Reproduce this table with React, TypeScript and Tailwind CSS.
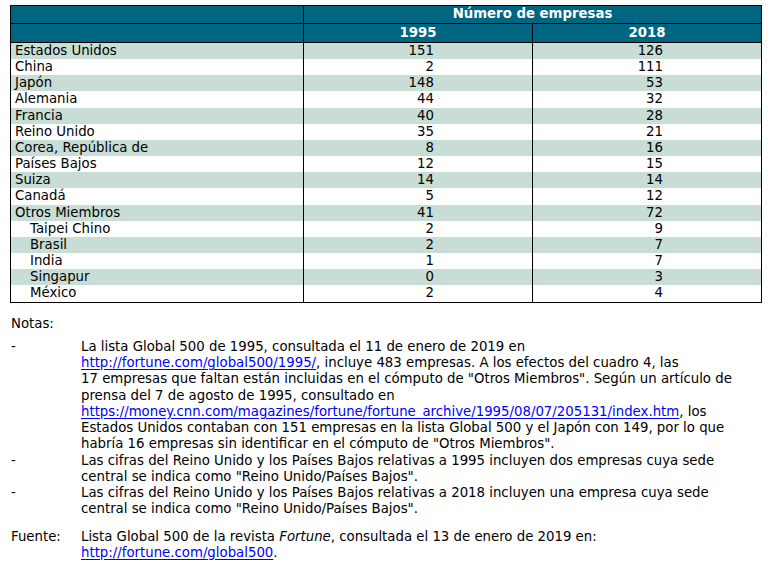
const rows: { name: string; a: number; b: number; sub?: boolean }[] = [
  { name: "Estados Unidos", a: 151, b: 126 },
  { name: "China", a: 2, b: 111 },
  { name: "Japón", a: 148, b: 53 },
  { name: "Alemania", a: 44, b: 32 },
  { name: "Francia", a: 40, b: 28 },
  { name: "Reino Unido", a: 35, b: 21 },
  { name: "Corea, República de", a: 8, b: 16 },
  { name: "Países Bajos", a: 12, b: 15 },
  { name: "Suiza", a: 14, b: 14 },
  { name: "Canadá", a: 5, b: 12 },
  { name: "Otros Miembros", a: 41, b: 72 },
  { name: "Taipei Chino", a: 2, b: 9, sub: true },
  { name: "Brasil", a: 2, b: 7, sub: true },
  { name: "India", a: 1, b: 7, sub: true },
  { name: "Singapur", a: 0, b: 3, sub: true },
  { name: "México", a: 2, b: 4, sub: true },
]

function Link({ children }: { children: React.ReactNode }) {
  return <span className="text-[#0000ff] underline underline-offset-2">{children}</span>
}

export default function App() {
  return (
    <div
      className="w-[773px] h-[568px] bg-white text-black text-[13.3px] leading-[16.25px] overflow-hidden"
      style={{ fontFamily: '"DejaVu Sans", Verdana, sans-serif' }}
    >
      <table className="ml-[10px] mt-[5px] w-[751px] border-collapse border border-black table-fixed">
        <colgroup>
          <col className="w-[293px]" />
          <col className="w-[229px]" />
          <col className="w-[229px]" />
        </colgroup>
        <thead className="bg-[#006580] text-white font-bold">
          <tr className="h-[18px]">
            <th className="border border-black p-0"></th>
            <th colSpan={2} className="border border-black p-0 text-center font-bold">
              Número de empresas
            </th>
          </tr>
          <tr className="h-[19px]">
            <th className="border border-black p-0"></th>
            <th className="border border-black p-0 pt-[1px] text-center font-bold">1995</th>
            <th className="border border-black p-0 pt-[1px] text-center font-bold">2018</th>
          </tr>
        </thead>
        <tbody>
          {rows.map((r, i) => (
            <tr key={r.name} className={`leading-[16.15px] ${i % 2 === 0 ? "bg-[#c8ddd5]" : "bg-white"}`}>
              <td className={`border-x border-black py-0 ${r.sub ? "pl-[19px]" : "pl-[4px]"}`}>{r.name}</td>
              <td className="border-x border-black py-0 pr-[98px] text-right">{r.a}</td>
              <td className="border-x border-black py-0 pr-[98px] text-right">{r.b}</td>
            </tr>
          ))}
        </tbody>
      </table>

      <div className="ml-[11px] mt-[13px]">Notas:</div>

      <div className="ml-[11px] mt-[7px] grid grid-cols-[70px_1fr] whitespace-nowrap">
        <div>-</div>
        <div>
          La lista Global 500 de 1995, consultada el 11 de enero de 2019 en
          <br />
          <Link>http://fortune.com/global500/1995/</Link>, incluye 483 empresas. A los efectos del cuadro 4, las
          <br />
          17 empresas que faltan están incluidas en el cómputo de "Otros Miembros". Según un artículo de
          <br />
          prensa del 7 de agosto de 1995, consultado en
          <br />
          <Link>https://money.cnn.com/magazines/fortune/fortune_archive/1995/08/07/205131/index.htm</Link>, los
          <br />
          Estados Unidos contaban con 151 empresas en la lista Global 500 y el Japón con 149, por lo que
          <br />
          habría 16 empresas sin identificar en el cómputo de "Otros Miembros".
        </div>
        <div>-</div>
        <div>
          Las cifras del Reino Unido y los Países Bajos relativas a 1995 incluyen dos empresas cuya sede
          <br />
          central se indica como "Reino Unido/Países Bajos".
        </div>
        <div>-</div>
        <div>
          Las cifras del Reino Unido y los Países Bajos relativas a 2018 incluyen una empresa cuya sede
          <br />
          central se indica como "Reino Unido/Países Bajos".
        </div>
        <div className="mt-[11px]">Fuente:</div>
        <div className="mt-[11px]">
          Lista Global 500 de la revista <i>Fortune</i>, consultada el 13 de enero de 2019 en:
          <br />
          <Link>http://fortune.com/global500</Link>.
        </div>
      </div>
    </div>
  )
}
